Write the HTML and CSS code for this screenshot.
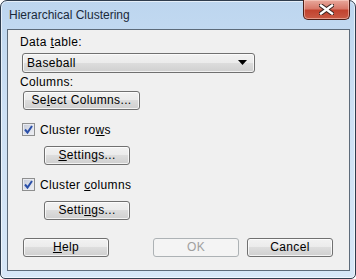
FILE: index.html
```html
<!DOCTYPE html>
<html>
<head>
  <meta charset="utf-8">
  <title>Hierarchical Clustering</title>
<link rel="stylesheet" href="styles.css">
</head>
<body>
  <div class="window">
    <div class="titlebar">
      <span class="title">Hierarchical Clustering</span>
      <div class="close">
        <svg width="15" height="11" viewBox="0 0 15 11">
          <path d="M2 1.5 L13 9.5 M13 1.5 L2 9.5" stroke="#3a2420" stroke-width="4.4" stroke-linecap="square"/>
          <path d="M2 1.5 L13 9.5 M13 1.5 L2 9.5" stroke="#fff" stroke-width="2.4" stroke-linecap="square"/>
        </svg>
      </div>
    </div>
    <div class="client">
      <div class="label">Data <u>t</u>able:</div>
      <div class="combo">
        <span>Baseball</span>
        <svg class="arrow" width="9" height="6" viewBox="0 0 9 6"><path d="M0 0 H9 L4.5 5 Z" fill="#000"/></svg>
      </div>
      <div class="label">Columns:</div>
      <div class="btn btn-select">Se<u>l</u>ect Columns...</div>
      <label class="check"><span class="box"><svg width="11" height="11" viewBox="0 0 11 11"><path d="M2 5.5 L4.5 8.5 L9 2" fill="none" stroke="#2a4fa8" stroke-width="2"/></svg></span><span>Cluster ro<u>w</u>s</span></label>
      <div class="btn btn-settings"><u>S</u>ettings...</div>
      <label class="check"><span class="box"><svg width="11" height="11" viewBox="0 0 11 11"><path d="M2 5.5 L4.5 8.5 L9 2" fill="none" stroke="#2a4fa8" stroke-width="2"/></svg></span><span>Cluster <u>c</u>olumns</span></label>
      <div class="btn btn-settings">Setti<u>n</u>gs...</div>
      <div class="actions">
        <div class="btn btn-help"><u>H</u>elp</div>
        <div class="btn btn-ok disabled">OK</div>
        <div class="btn btn-cancel">Cancel</div>
      </div>
    </div>
  </div>
</body>
</html>
```

FILE: styles.css
```css
html, body {
  margin: 0;
  padding: 0;
}

body {
  width: 356px;
  height: 279px;
  font-family: "Liberation Sans", Arial, sans-serif;
  font-size: 12px;
  color: #000;
  background: #fff;
}

.window {
  box-sizing: border-box;
  width: 356px;
  height: 279px;
  border: 1px solid #2f3d4e;
  border-radius: 7px 7px 5px 5px;
  padding: 0 5px 7px 6px;
  background: linear-gradient(to bottom, #bdd6ef 0%, #cde0f4 40%, #d7e7f7 100%);
  box-shadow: inset 0 0 0 1px rgba(255, 255, 255, 0.6);
}

.titlebar {
  height: 28px;
  display: flex;
  align-items: flex-start;
}

.title {
  margin-top: 7px;
  margin-left: 2px;
  font-size: 12px;
  color: #1b2a3a;
}

.close {
  margin-left: auto;
  margin-top: -1px;
  width: 47px;
  height: 20px;
  box-sizing: border-box;
  border: 1px solid #4d1e17;
  border-top: none;
  border-radius: 0 0 5px 5px;
  background: linear-gradient(to bottom, #e8a89c 0%, #d8796a 45%, #c2432f 55%, #c95a45 100%);
  box-shadow: inset 0 0 0 1px rgba(255, 220, 210, 0.5);
  display: flex;
  align-items: center;
  justify-content: center;
}

.client {
  box-sizing: border-box;
  width: 343px;
  height: 242px;
  border: 1px solid #5d6b7a;
  background: #f0f0f0;
  padding: 5px 0 0 12px;
  display: flex;
  flex-direction: column;
  align-items: flex-start;
  letter-spacing: 0.35px;
}

.label {
  height: 15px;
  line-height: 15px;
}

.combo {
  box-sizing: border-box;
  width: 233px;
  height: 20px;
  margin: 3px 0 2px 2px;
  border: 1px solid #707070;
  border-radius: 3px;
  background: linear-gradient(to bottom, #f2f2f2 0%, #ebebeb 50%, #dddddd 50%, #cfcfcf 100%);
  box-shadow: inset 0 0 0 1px rgba(255, 255, 255, 0.7);
  display: flex;
  align-items: center;
  padding: 0 4px;
}

.combo span {
  flex: 1;
}

.arrow {
  margin-right: 3px;
}

.btn {
  box-sizing: border-box;
  height: 19px;
  line-height: 17px;
  border: 1px solid #707070;
  border-radius: 3px;
  background: linear-gradient(to bottom, #f2f2f2 0%, #ebebeb 50%, #dddddd 50%, #cfcfcf 100%);
  box-shadow: inset 0 0 0 1px rgba(255, 255, 255, 0.75);
  text-align: center;
}

.btn-select {
  width: 117px;
  margin: 1px 0 0 3px;
}

.btn-settings {
  width: 86px;
  margin: 9px 0 0 24px;
}

.check {
  display: flex;
  align-items: center;
  height: 15px;
  margin: 12px 0 0 2px;
}

.box {
  box-sizing: border-box;
  width: 13px;
  height: 13px;
  margin-right: 5px;
  border: 1px solid #8e8f8f;
  background: linear-gradient(135deg, #c3c8d6 0%, #dfe2ea 60%, #f0f1f5 100%);
  box-shadow: inset 0 0 0 1px #e8eaf0;
  display: flex;
  align-items: center;
  justify-content: center;
}

.actions {
  display: flex;
  margin-top: 18px;
}

.btn-help,
.btn-ok,
.btn-cancel {
  width: 86px;
}

.btn-help {
  margin-left: 3px;
}

.btn-ok {
  margin-left: 44px;
}

.btn-cancel {
  margin-left: 8px;
}

.disabled {
  border-color: #adb2b5;
  background: #f4f4f4;
  color: #a0a0a0;
  box-shadow: none;
}
```
